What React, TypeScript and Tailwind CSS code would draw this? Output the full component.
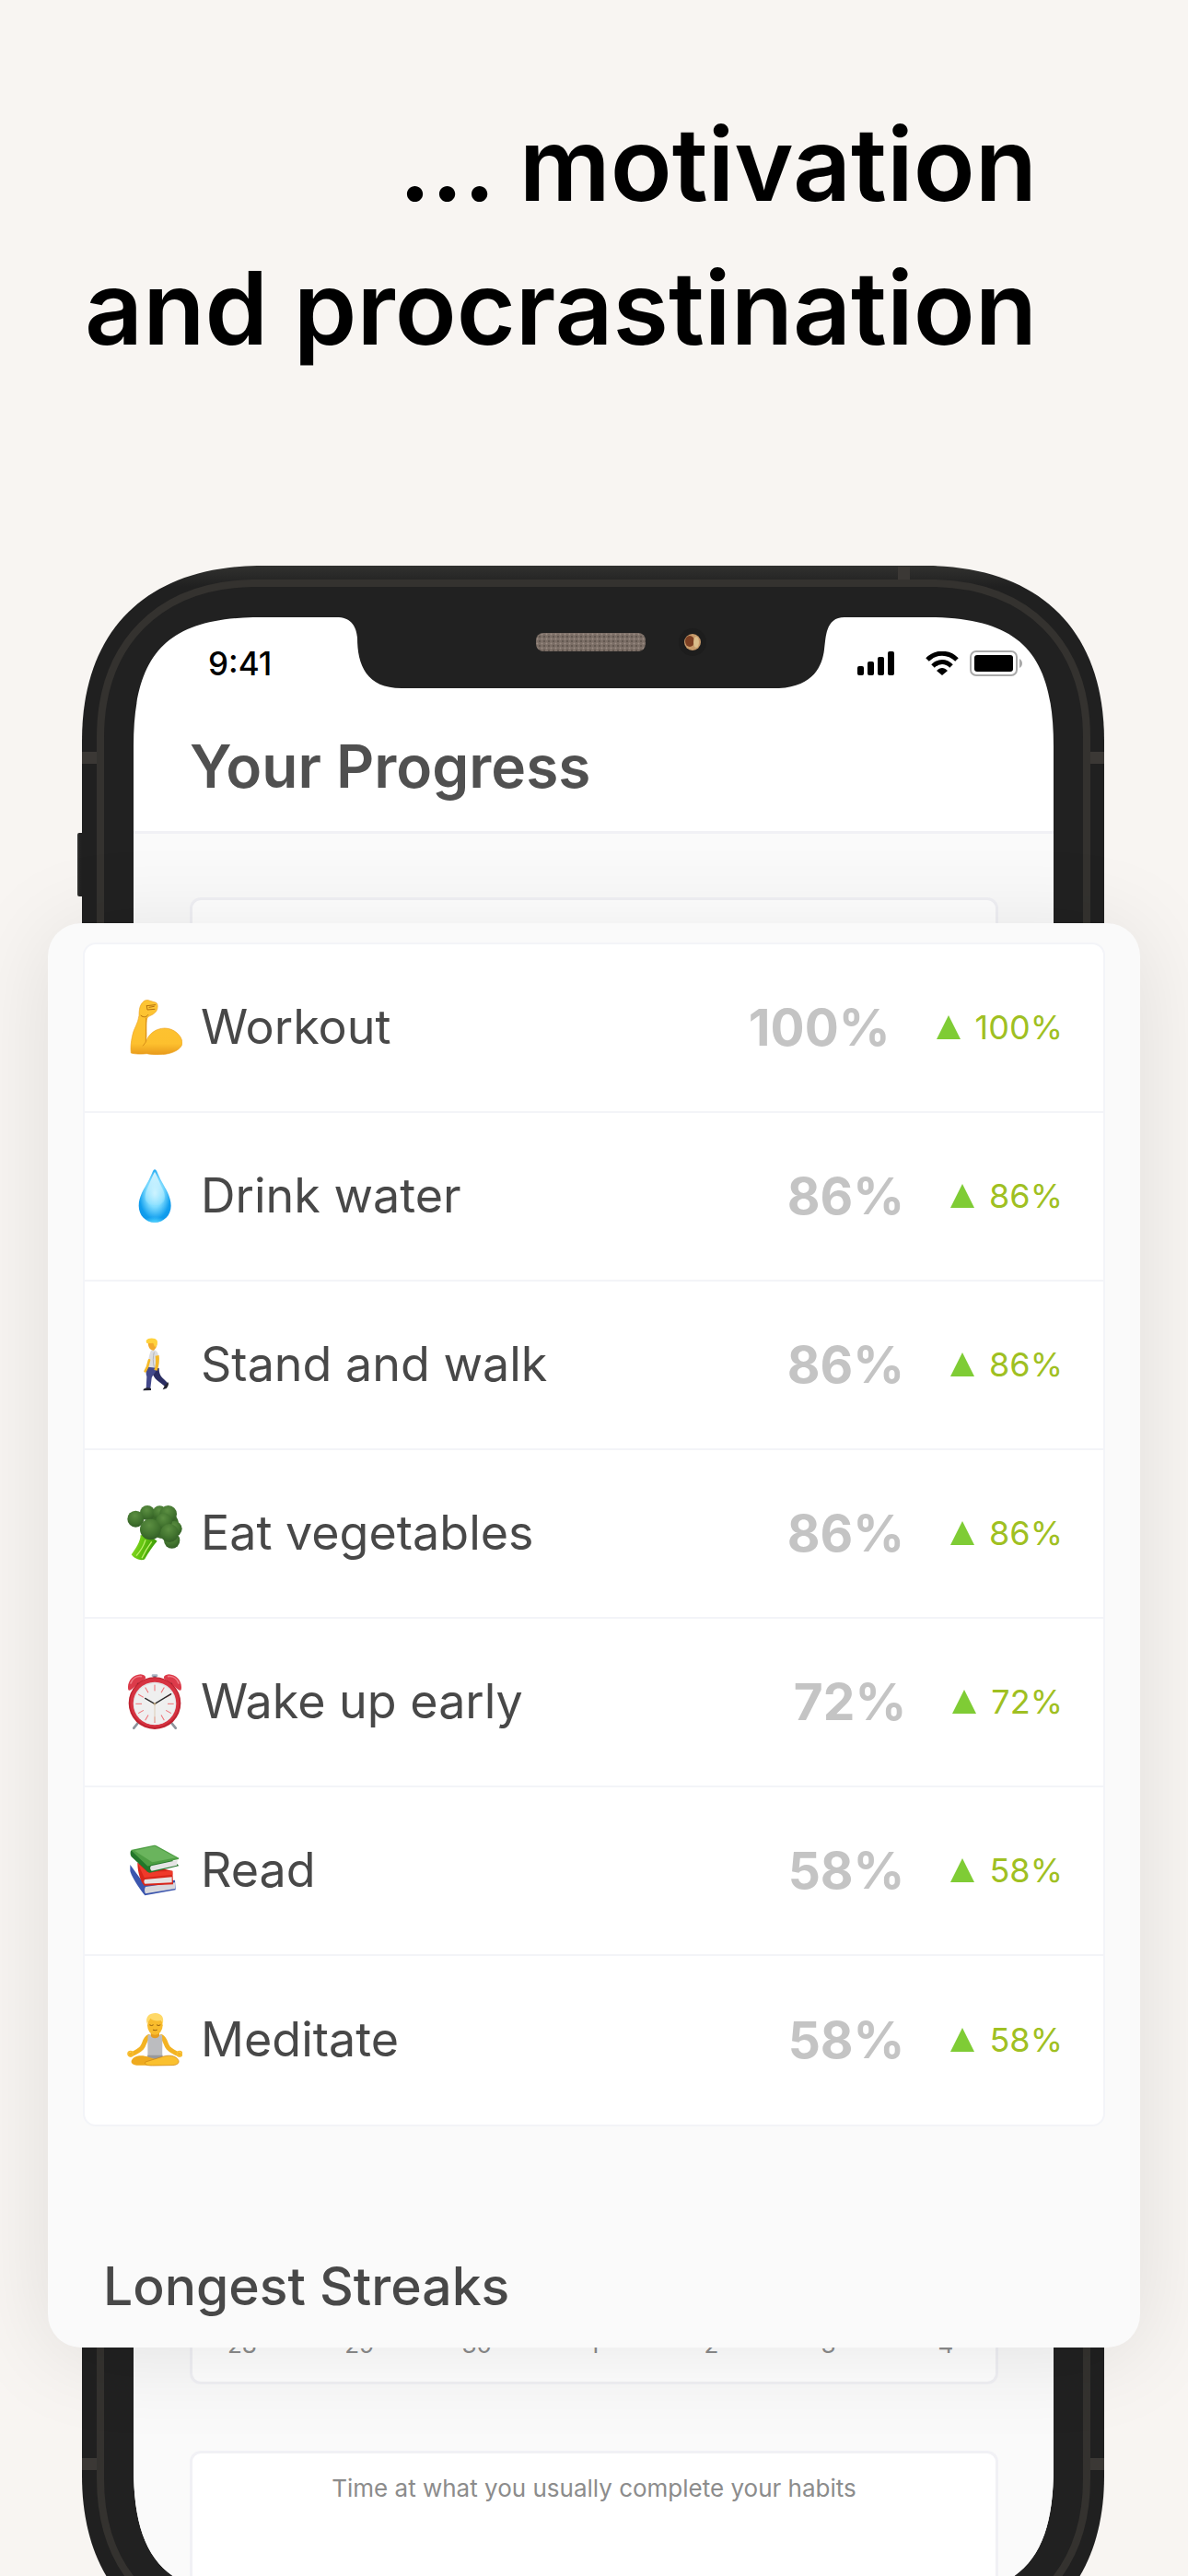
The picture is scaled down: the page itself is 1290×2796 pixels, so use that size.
import type { ReactNode } from "react";

function Emoji({ label, children }: { label: string; children: ReactNode }) {
  return (
    <svg role="img" aria-label={label} viewBox="0 0 180 180" className="size-[60px] shrink-0">
      {children}
    </svg>
  );
}

function Biceps() {
  return (
    <Emoji label="Flexed biceps">
      <defs>
        <linearGradient id="armFill" x1="0" y1="0" x2="0" y2="1">
          <stop offset="0" stopColor="#fdc534" />
          <stop offset="0.8" stopColor="#fdc02e" />
          <stop offset="1" stopColor="#e89a1c" />
        </linearGradient>
      </defs>
      <path
        d="M13 174 C11 160 12 140 17 118 C21 95 36 78 39 52 C39 38 40 22 48 12 C55 2 63 0 72 3 L95 10 C101 14 100 28 97 34 C92 46 80 50 68 56 C60 66 64 98 63 122 L61 138 C70 112 92 94 122 93 C152 93 178 116 180 140 C180 152 168 164 148 172 C120 182 88 180 64 176 C46 178 28 178 13 174 Z"
        fill="url(#armFill)"
        stroke="#eda526"
        strokeWidth="2"
      />
      <path d="M62 60 L61 138 L52 150" fill="none" stroke="#d88f18" strokeWidth="3" strokeLinecap="round" />
      <path d="M64 20 L92 17 M64 20 L66 33 L90 31 M72 25 L88 22 M45 52 C55 60 64 56 68 50" fill="none" stroke="#b5720f" strokeWidth="3" strokeLinecap="round" />
    </Emoji>
  );
}

function Droplet() {
  return (
    <Emoji label="Droplet">
      <defs>
        <radialGradient id="dropFill" cx="0.5" cy="0.45" r="0.58">
          <stop offset="0" stopColor="#c8f2ff" />
          <stop offset="0.45" stopColor="#7fdcff" />
          <stop offset="0.85" stopColor="#109eee" />
          <stop offset="1" stopColor="#0f97ea" />
        </radialGradient>
        <linearGradient id="dropShine" x1="0" y1="0" x2="0" y2="1">
          <stop offset="0" stopColor="#eafaff" stopOpacity="0.9" />
          <stop offset="1" stopColor="#c8f2ff" stopOpacity="0.1" />
        </linearGradient>
        <radialGradient id="dropGlow" cx="0.5" cy="1" r="0.5">
          <stop offset="0" stopColor="#54d6ff" />
          <stop offset="1" stopColor="#54d6ff" stopOpacity="0" />
        </radialGradient>
      </defs>
      <path d="M90 4 C97 4 101 22 112 42 C125 66 143 92 143 122 C143 154 119 176 90 176 C61 176 38 154 38 122 C38 92 56 66 69 42 C80 22 84 4 90 4 Z" fill="url(#dropFill)" />
      <path d="M90 12 C97 22 104 44 116 68 C124 84 126 100 118 110 C106 124 76 124 64 110 C56 100 58 84 65 68 C76 44 84 22 90 12 Z" fill="url(#dropShine)" />
      <ellipse cx="90" cy="158" rx="40" ry="18" fill="url(#dropGlow)" />
    </Emoji>
  );
}

function Walker() {
  return (
    <Emoji label="Person walking">
      <path d="M88 96 L104 102 C104 118 108 128 120 138 L132 150 L124 162 L98 142 C90 134 84 126 82 116 Z" fill="#2b2e63" />
      <path d="M66 96 L100 98 C98 112 84 122 80 134 L76 168 L62 168 L64 130 C60 118 62 108 66 96 Z" fill="#43498b" />
      <path d="M54 170 C60 166 68 164 78 168 L78 174 L52 175 Z" fill="#22232f" />
      <path d="M122 160 L133 148 C137 152 134 162 128 168 L116 172 Z" fill="#22232f" />
      <path d="M78 44 C90 40 100 46 102 60 C104 76 104 90 102 102 L68 98 C68 80 72 56 78 44 Z" fill="#dcdde0" />
      <path d="M88 50 C84 64 84 84 88 98" fill="none" stroke="#b4b5ba" strokeWidth="3" />
      <path d="M92 62 L104 60 C106 76 104 94 98 110 L88 108 C94 94 94 78 92 62 Z" fill="#f5b928" />
      <path d="M72 76 L66 98 L59 112" fill="none" stroke="#f5b928" strokeWidth="8" strokeLinecap="round" />
      <path d="M68 16 L96 14 C100 28 94 38 86 44 C76 44 68 36 68 16 Z" fill="#f2a92b" />
      <path d="M62 12 C68 2 92 2 98 12 C100 20 98 30 92 34 C86 28 88 22 84 20 C76 22 68 20 63 20 Z" fill="#ffd23c" />
    </Emoji>
  );
}

function Broccoli() {
  return (
    <Emoji label="Broccoli">
      <defs>
        <radialGradient id="floret" cx="0.45" cy="0.3" r="0.8">
          <stop offset="0" stopColor="#5c8f42" />
          <stop offset="0.55" stopColor="#42742f" />
          <stop offset="1" stopColor="#2d5722" />
        </radialGradient>
        <linearGradient id="stalk" x1="0" y1="0" x2="1" y2="0.3">
          <stop offset="0" stopColor="#9be02f" />
          <stop offset="0.5" stopColor="#63c50f" />
          <stop offset="1" stopColor="#3c9a08" />
        </linearGradient>
      </defs>
      <path d="M44 96 L84 106 L98 116 C84 132 70 152 58 174 C52 182 24 176 14 160 C26 142 44 118 44 96 Z" fill="url(#stalk)" />
      <path d="M60 112 C54 132 44 148 30 164 M80 118 C68 134 58 150 48 172" fill="none" stroke="#bff06a" strokeWidth="4" />
      <ellipse cx="118" cy="62" rx="50" ry="46" fill="#3a6b28" />
      <circle cx="66" cy="24" r="24" fill="url(#floret)" />
      <circle cx="106" cy="24" r="23" fill="url(#floret)" />
      <circle cx="134" cy="28" r="28" fill="url(#floret)" />
      <circle cx="28" cy="44" r="27" fill="url(#floret)" />
      <circle cx="154" cy="76" r="25" fill="url(#floret)" />
      <circle cx="120" cy="52" r="27" fill="url(#floret)" />
      <circle cx="146" cy="114" r="26" fill="url(#floret)" />
      <circle cx="138" cy="90" r="30" fill="url(#floret)" />
      <circle cx="76" cy="78" r="34" fill="url(#floret)" />
    </Emoji>
  );
}

function AlarmClock() {
  const ticks = [0, 30, 60, 90, 120, 150, 180, 210, 240, 270, 300, 330];
  return (
    <Emoji label="Alarm clock">
      <path d="M38 156 L22 176 M142 156 L158 176" stroke="#8d949c" strokeWidth="8" strokeLinecap="round" />
      <rect x="80" y="1" width="20" height="8" rx="3" fill="#a9b4c2" />
      <rect x="85" y="6" width="10" height="12" fill="#76818f" />
      <path d="M4 52 C-2 26 18 2 44 1 C56 2 62 8 60 14 L14 50 C10 54 6 54 4 52 Z" fill="#dc3b4a" />
      <path d="M176 52 C182 26 162 2 136 1 C124 2 118 8 120 14 L166 50 C170 54 174 54 176 52 Z" fill="#dc3b4a" />
      <path d="M12 30 C18 14 32 6 46 8 M168 30 C162 14 148 6 134 8" fill="none" stroke="#f07b85" strokeWidth="5" strokeLinecap="round" />
      <path d="M34 30 L44 40 M146 30 L136 40" stroke="#6b2a30" strokeWidth="6" />
      <circle cx="90" cy="95" r="85" fill="#bf2230" />
      <circle cx="90" cy="93" r="80" fill="#d63341" />
      <circle cx="90" cy="96" r="70" fill="#e3e3e5" />
      <circle cx="90" cy="98" r="67" fill="#efefef" />
      {ticks.map((angle) => (
        <path key={angle} d="M90 35 L90 55" stroke="#ee6f74" strokeWidth="3" transform={`rotate(${angle} 90 97)`} />
      ))}
      <path d="M90 97 L90 155" stroke="#dccdb6" strokeWidth="3" />
      <path d="M90 97 L59 79" stroke="#2d2d2d" strokeWidth="4" strokeLinecap="round" />
      <path d="M90 97 L143 65" stroke="#2d2d2d" strokeWidth="4" strokeLinecap="round" />
      <circle cx="90" cy="97" r="4" fill="#b9a37e" />
    </Emoji>
  );
}

function Books() {
  return (
    <Emoji label="Books">
      <path d="M10 72 L54 132 L156 122 L158 154 L58 172 C46 158 14 112 10 92 Z" fill="#3c56ae" />
      <path d="M60 144 L156 130 L156 150 L60 166 C56 160 56 150 60 144 Z" fill="#d8d8dc" />
      <path d="M34 66 L148 92 L150 136 L56 140 C44 128 34 96 34 66 Z" fill="#d8261a" />
      <path d="M58 120 L146 112 L146 130 L58 134 C54 130 54 124 58 120 Z" fill="#e6e3e2" />
      <path d="M34 66 L66 96 L148 92 L148 104 L56 114 Z" fill="#ef3a2a" />
      <path d="M12 26 C10 32 10 40 14 46 L68 96 C72 100 76 98 80 97 L168 76 L166 72 L100 20 Z" fill="#23762a" />
      <path d="M78 76 L164 57 L162 74 L80 92 C74 88 74 80 78 76 Z" fill="#e4e4e4" />
      <path d="M12 24 L88 8 C92 8 94 9 98 11 L169 50 L168 54 L80 72 C74 74 70 78 66 76 Z" fill="#4e9e44" />
      <path d="M24 26 L90 11 L160 49 L82 64 Z" fill="#74bb66" opacity="0.75" />
    </Emoji>
  );
}

function Meditator() {
  return (
    <Emoji label="Person in lotus position">
      <path d="M70 80 C56 88 58 104 48 116 C38 126 26 132 12 138" fill="none" stroke="#f3b323" strokeWidth="15" strokeLinecap="round" strokeLinejoin="round" />
      <path d="M112 80 C126 88 124 104 134 116 C144 126 156 132 170 138" fill="none" stroke="#f3b323" strokeWidth="15" strokeLinecap="round" strokeLinejoin="round" />
      <path d="M78 60 L104 60 L106 82 C98 90 84 90 76 82 Z" fill="#e69c1f" />
      <path d="M68 74 L76 74 C80 88 102 88 106 74 L114 74 C116 100 114 122 115 146 C100 152 82 152 67 146 C68 122 66 100 68 74 Z" fill="#bbbcbf" />
      <path d="M66 140 L116 140 L112 170 L70 170 Z" fill="#98999c" />
      <path d="M14 158 C22 140 48 138 70 146 L122 162 C126 170 114 173 100 173 L38 173 C22 173 12 168 14 158 Z" fill="#eeaa1f" />
      <path d="M168 158 C160 140 134 138 112 146 L60 162 C54 171 68 174 82 174 L144 173 C160 173 170 168 168 158 Z" fill="#fac02f" stroke="#c98012" strokeWidth="2" />
      <circle cx="11" cy="136" r="8" fill="none" stroke="#f7bd31" strokeWidth="5" />
      <circle cx="171" cy="136" r="8" fill="none" stroke="#f7bd31" strokeWidth="5" />
      <ellipse cx="91" cy="43" rx="25" ry="31" fill="#f8bb2c" />
      <path d="M65 38 C58 14 74 3 92 3 C112 4 122 16 116 40 L112 27 C96 30 84 28 76 20 C72 28 68 32 65 38 Z" fill="#ffd968" />
      <path d="M74 42 Q80 46 85 42 M97 42 Q102 46 108 42 M85 58 Q91 61 97 58" fill="none" stroke="#96600e" strokeWidth="3" strokeLinecap="round" />
    </Emoji>
  );
}

const habits: { name: string; rate: string; icon: ReactNode }[] = [
  { name: "Workout", rate: "100%", icon: <Biceps /> },
  { name: "Drink water", rate: "86%", icon: <Droplet /> },
  { name: "Stand and walk", rate: "86%", icon: <Walker /> },
  { name: "Eat vegetables", rate: "86%", icon: <Broccoli /> },
  { name: "Wake up early", rate: "72%", icon: <AlarmClock /> },
  { name: "Read", rate: "58%", icon: <Books /> },
  { name: "Meditate", rate: "58%", icon: <Meditator /> },
];

const days = ["28", "29", "30", "1", "2", "3", "4"];

const screenPath =
  "M275 670 L368 670 C382 671 387 681 388 692 C388 722 398 747 436 747 L846 747 C884 745 893 722 895 705 C897 692 896 670 917 670 L1014 670 C1110 672 1144 712 1144 810 L1144 2678 C1144 2776 1110 2816 1014 2818 L275 2818 C179 2816 145 2776 145 2678 L145 810 C145 712 179 672 275 670 Z";

function PhoneFrame() {
  return (
    <svg aria-hidden="true" viewBox="0 614 1290 2264" className="absolute inset-x-0 top-0 w-full">
      <defs>
        <clipPath id="screenClip">
          <path d={screenPath} />
        </clipPath>
        <linearGradient id="rim" x1="0" y1="0" x2="0" y2="1">
          <stop offset="0" stopColor="#31312f" />
          <stop offset="0.01" stopColor="#202020" />
          <stop offset="1" stopColor="#202020" />
        </linearGradient>
        <linearGradient id="sideRim" x1="0" y1="0" x2="1" y2="0">
          <stop offset="0" stopColor="#3a3a38" />
          <stop offset="0.3" stopColor="#242424" />
          <stop offset="1" stopColor="#1c1c1c" />
        </linearGradient>
        <pattern id="mesh" width="5" height="5" patternUnits="userSpaceOnUse">
          <rect width="5" height="5" fill="#7b6e66" />
          <circle cx="1" cy="1" r="1" fill="#5b504a" />
          <circle cx="3.5" cy="3.5" r="1" fill="#9a8c83" />
        </pattern>
      </defs>
      <rect x="84" y="904" width="8" height="69" rx="2" fill="url(#sideRim)" />
      <path
        d="M279 614 L1009 614 C1129 616 1199 684 1199 804 L1199 2687 C1199 2807 1129 2875 1009 2877 L279 2877 C159 2875 89 2807 89 2687 L89 804 C89 684 159 616 279 614 Z"
        fill="url(#rim)"
      />
      <path
        d="M274 633 L1014 633 C1116 635 1180 699 1180 801 L1180 2690 C1180 2792 1116 2856 1014 2858 L274 2858 C172 2856 109 2792 109 2690 L109 801 C109 699 172 635 274 633 Z"
        fill="#212121"
        stroke="#34322f"
        strokeWidth="8"
      />
      <path d="M975 615 H988 V629 H975 Z M89 816 H105 V829 H89 Z M1184 816 H1199 V829 H1184 Z M89 2668 H105 V2681 H89 Z M1184 2668 H1199 V2681 H1184 Z" fill="#3b3835" />
      <path d={screenPath} fill="#ffffff" />
      <g clipPath="url(#screenClip)">
        <rect x="140" y="903" width="1010" height="1920" fill="#fafafa" />
        <rect x="140" y="902" width="1010" height="3" fill="#f1f1f5" />
      </g>
      <rect x="582" y="687" width="119" height="20" rx="8" fill="url(#mesh)" />
      <circle cx="752" cy="697" r="15" fill="#1d1d1d" />
      <ellipse cx="752" cy="697" rx="9" ry="9" fill="#c79a6a" />
      <ellipse cx="749" cy="696" rx="5" ry="6" fill="#7c3f22" />
      <ellipse cx="756" cy="697" rx="3" ry="6" fill="#dbbd8b" />
    </svg>
  );
}

function StatusIcons() {
  return (
    <div className="flex items-center">
      <svg aria-label="Signal strength" role="img" viewBox="0 0 40 26" className="h-[26px] w-10">
        <rect x="0" y="16" width="7" height="10" rx="2" />
        <rect x="11" y="11" width="7" height="15" rx="2" />
        <rect x="22" y="6" width="7" height="20" rx="2" />
        <rect x="33" y="0" width="7" height="26" rx="2" />
      </svg>
      <svg aria-label="Wi-Fi" role="img" viewBox="0 0 36 26" className="ml-[34px] h-[26px] w-9">
        <path d="M2 9 C11 0 25 0 34 9" fill="none" stroke="#000" strokeWidth="5" />
        <path d="M8 16 C14 10 22 10 28 16" fill="none" stroke="#000" strokeWidth="5" />
        <path d="M12 21 C16 17 20 17 24 21 L18 26 Z" />
      </svg>
      <svg aria-label="Battery full" role="img" viewBox="0 0 58 28" className="ml-3 h-7 w-[58px]">
        <rect x="1" y="1" width="50" height="26" rx="6" fill="none" stroke="#a9a9a9" strokeWidth="2" />
        <rect x="5" y="5" width="42" height="18" rx="3" />
        <path d="M54 9 C58 11 58 17 54 19 Z" fill="#a9a9a9" />
      </svg>
    </div>
  );
}

export default function App() {
  return (
    <main className="flex min-h-screen flex-col overflow-hidden bg-[#f8f5f2] font-['Inter',sans-serif]">
      <h1 className="mx-auto flex w-full max-w-[1290px] flex-col items-end pt-[100px] pr-[164px] text-[110px] leading-[156px] font-semibold whitespace-nowrap text-black">
        <span>… motivation</span>
        <span>and procrastination</span>
      </h1>

      <div className="relative mx-auto mt-[202px] grid w-full max-w-[1290px] flex-1">
        <PhoneFrame />

        <div className="relative col-start-1 row-start-1 mx-[146px] flex flex-col">
          <div className="flex h-[212px] items-center justify-between pr-[33px] pl-20">
            <time className="text-[35px] leading-10 font-medium">9:41</time>
            <StatusIcons />
          </div>
          <h2 className="-mt-[38px] h-[117px] pl-[60px] text-[64px] leading-[88px] font-semibold text-[#505050]">Your Progress</h2>
          <div className="mx-[60px] mt-[69px] h-[700px] rounded-xl border-3 border-[#f1f1f5] bg-white" />
          <div className="mx-[60px] mt-[72px] flex h-[842px] items-end justify-between rounded-xl border-3 border-[#f1f1f5] bg-white px-[22px] pb-6 text-[26px] leading-8 text-[#8c8c8c]">
            {days.map((day) => (
              <span key={day} className="w-16 text-center">
                {day}
              </span>
            ))}
          </div>
          <div className="mx-[60px] mt-[72px] h-[136px] rounded-t-xl border-3 border-b-0 border-[#f1f1f5] bg-white pt-[22px] text-center text-[26px] leading-8 text-[#8c8c8c]">
            Time at what you usually complete your habits
          </div>
        </div>

        <section className="relative col-start-1 row-start-1 mx-[52px] mt-[388px] self-start rounded-[36px] bg-[#fafafa] px-[38px] pt-[21px] pb-6 shadow-[0_8px_100px_rgba(0,0,0,0.1)]">
          <ul className="divide-y-2 divide-[#f3f4f8] rounded-[14px] border-2 border-[#f3f4f8] bg-white">
            {habits.map((habit) => (
              <li key={habit.name} className="flex h-[183px] items-center pr-11 pb-0.5 pl-[46px]">
                {habit.icon}
                <span className="ml-5 grow text-[52px] leading-[72px] text-[#484848]">{habit.name}</span>
                <span className="text-[55px] leading-[72px] font-bold text-[#c4c4c4]">{habit.rate}</span>
                <svg aria-label="Up" role="img" viewBox="0 0 26 26" className="ml-[50px] size-[26px]">
                  <path d="M13 0 L26 26 H0 Z" fill="#7fcc35" />
                </svg>
                <span className="ml-4 text-[36px] leading-[48px] text-[#9fc022]">{habit.rate}</span>
              </li>
            ))}
          </ul>
          <h2 className="mt-[132px] pl-[22px] text-[57px] leading-[84px] font-medium text-[#484848]">Longest Streaks</h2>
        </section>
      </div>
    </main>
  );
}
